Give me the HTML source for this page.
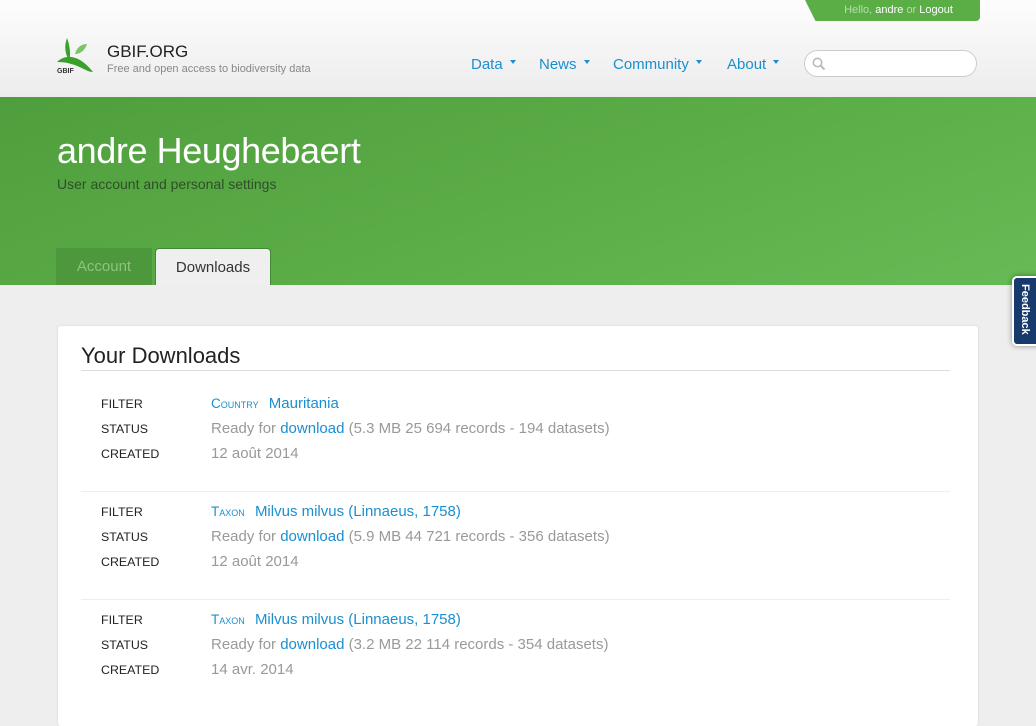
<!DOCTYPE html>
<html><head><meta charset="utf-8"><style>
*{margin:0;padding:0;box-sizing:border-box}
body{width:1036px;height:692px;overflow:hidden;background:#eeeeee;font-family:"Liberation Sans",Helvetica,Arial,sans-serif;position:relative}
.hdr{position:absolute;left:0;top:0;width:1036px;height:97px;background:linear-gradient(#fdfdfd,#ececec)}
.hello{position:absolute;left:805px;top:0;width:175px;height:21px;background:#5aae45;border-radius:0 0 4px 4px;clip-path:polygon(0 0,100% 0,100% 100%,6% 100%);color:#fff;font-size:11px;line-height:20px;text-align:center;padding-left:12px}
.hello span{color:#b9dcae}
.brand{position:absolute;left:107px;top:42px;font-size:17px;color:#222}
.tag{position:absolute;left:107px;top:63px;font-size:11px;color:#888}
.nav{position:absolute;top:56px;font-size:15px;color:#1a8fd0}
.nav i{display:inline-block;border:3px solid transparent;border-top:4px solid #1a8fd0;margin-left:7px;vertical-align:2px}
.search{position:absolute;left:804px;top:50px;width:173px;height:27px;border:1px solid #ccc;border-radius:14px;background:#fff}
.green{position:absolute;left:0;top:97px;width:1036px;height:188px;background:linear-gradient(160deg,#4f9e3d 0%,#5daf49 60%,#67ba55 100%)}
h1{position:absolute;left:57px;top:130px;font-size:36px;font-weight:normal;color:#fff;letter-spacing:-0.4px}
.sub{position:absolute;left:57px;top:176px;font-size:14px;color:#2f4f27}
.tab1{position:absolute;left:56px;top:248px;width:96px;height:37px;background:#4d983d;color:#8cc47b;font-size:15px;text-align:center;line-height:38px}
.tab2{position:absolute;left:155px;top:248px;width:116px;height:37px;background:#efefef;border:1px solid #3f8a32;border-bottom:none;border-radius:4px 4px 0 0;color:#333;font-size:15px;text-align:center;line-height:37px}
.card{position:absolute;left:58px;top:326px;width:920px;height:400px;background:#fff;border-radius:3px;box-shadow:0 0 2px rgba(0,0,0,.12)}
h2{position:absolute;left:81px;top:343px;font-size:22px;font-weight:normal;color:#222}
.hr{position:absolute;left:81px;width:869px;height:1px;background:#ddd}
.l{position:absolute;left:101px;font-size:12.4px;color:#222}
.v{position:absolute;left:211px;font-size:15px;color:#999}
a{color:#1a8fd0;text-decoration:none}
.sc{font-size:13.5px;font-variant:small-caps;color:#1a8fd0;margin-right:6px}
.fb{position:absolute;left:1012px;top:276px;width:30px;height:70px;background:#153a6b;border:2px solid #fff;border-radius:5px 0 0 5px;box-shadow:0 0 6px rgba(0,0,0,.4)}
.fb span{position:absolute;left:5px;top:6px;writing-mode:vertical-rl;color:#fff;font-size:11px;font-weight:bold}
</style></head><body>
<div class="hdr"></div>
<div class="hello"><span>Hello,</span> andre <span>or</span> Logout</div>
<svg style="position:absolute;left:55px;top:36px" width="44" height="40" viewBox="0 0 44 40">
<path d="M12 2 C9 10 10 18 14 24 C16 20 15 10 12 2Z" fill="#3aa02c"/>
<path d="M20 18 C22 10 28 8 32 8 C30 14 26 18 20 18Z" fill="#7cc46a"/>
<path d="M2 26 C10 18 24 18 38 36 C30 36 22 26 2 26Z" fill="#3aa02c"/>
<text x="2" y="37" font-size="7" font-weight="bold" fill="#333" font-family="Liberation Sans">GBIF</text>
</svg>
<div class="brand">GBIF.ORG</div>
<div class="tag">Free and open access to biodiversity data</div>
<div class="nav" style="left:471px">Data<i></i></div>
<div class="nav" style="left:539px">News<i></i></div>
<div class="nav" style="left:613px">Community<i></i></div>
<div class="nav" style="left:727px">About<i></i></div>
<div class="search"><svg style="position:absolute;left:7px;top:6px" width="14" height="14" viewBox="0 0 14 14"><circle cx="5.5" cy="5.5" r="4.2" stroke="#bbb" stroke-width="1.6" fill="none"/><path d="M8.5 8.5L12.5 12.5" stroke="#bbb" stroke-width="2"/></svg></div>
<div class="green"></div>
<h1>andre Heughebaert</h1>
<div class="sub">User account and personal settings</div>
<div class="tab1">Account</div>
<div class="tab2">Downloads</div>
<div class="card"></div>
<h2>Your Downloads</h2>
<div class="hr" style="top:370px"></div>

<div class="l" style="top:397px">FILTER</div><div class="v" style="top:395px"><span class="sc">Country</span> <a>Mauritania</a></div>
<div class="l" style="top:422px">STATUS</div><div class="v" style="top:420px">Ready for <a>download</a> (5.3 MB 25 694 records - 194 datasets)</div>
<div class="l" style="top:447px">CREATED</div><div class="v" style="top:445px">12 août 2014</div>
<div class="hr" style="top:491px;background:#eee"></div>

<div class="l" style="top:505px">FILTER</div><div class="v" style="top:503px"><span class="sc">Taxon</span> <a>Milvus milvus (Linnaeus, 1758)</a></div>
<div class="l" style="top:530px">STATUS</div><div class="v" style="top:528px">Ready for <a>download</a> (5.9 MB 44 721 records - 356 datasets)</div>
<div class="l" style="top:555px">CREATED</div><div class="v" style="top:553px">12 août 2014</div>
<div class="hr" style="top:599px;background:#eee"></div>

<div class="l" style="top:613px">FILTER</div><div class="v" style="top:611px"><span class="sc">Taxon</span> <a>Milvus milvus (Linnaeus, 1758)</a></div>
<div class="l" style="top:638px">STATUS</div><div class="v" style="top:636px">Ready for <a>download</a> (3.2 MB 22 114 records - 354 datasets)</div>
<div class="l" style="top:663px">CREATED</div><div class="v" style="top:661px">14 avr. 2014</div>

<div class="fb"><span>Feedback</span></div>
</body></html>
